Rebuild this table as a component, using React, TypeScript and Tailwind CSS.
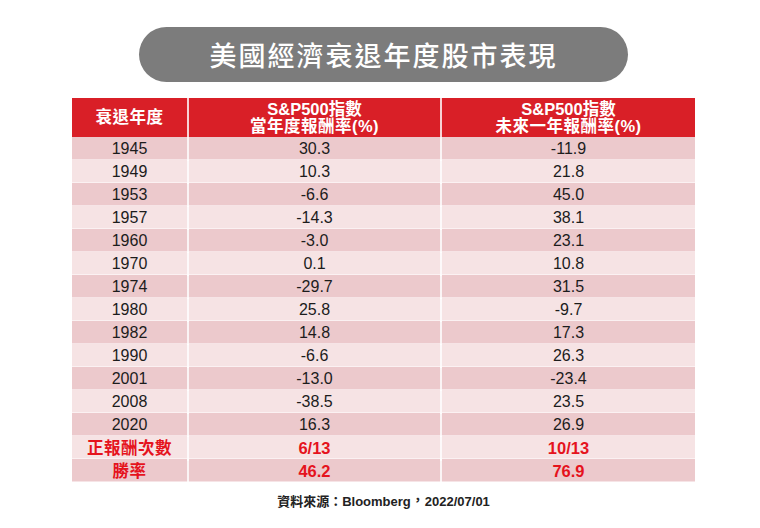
const rows: [string, string, string][] = [
  ["1945", "30.3", "-11.9"],
  ["1949", "10.3", "21.8"],
  ["1953", "-6.6", "45.0"],
  ["1957", "-14.3", "38.1"],
  ["1960", "-3.0", "23.1"],
  ["1970", "0.1", "10.8"],
  ["1974", "-29.7", "31.5"],
  ["1980", "25.8", "-9.7"],
  ["1982", "14.8", "17.3"],
  ["1990", "-6.6", "26.3"],
  ["2001", "-13.0", "-23.4"],
  ["2008", "-38.5", "23.5"],
  ["2020", "16.3", "26.9"],
];

const summary: [string, string, string][] = [
  ["正報酬次數", "6/13", "10/13"],
  ["勝率", "46.2", "76.9"],
];

const font = { fontFamily: '"Liberation Sans", "Noto Sans CJK TC", sans-serif' };
const tc = { fontFamily: '"Noto Sans CJK TC", sans-serif' };

function Cell({ children, last, className }: { children: React.ReactNode; last?: boolean; className?: string }) {
  return (
    <div
      className={`flex items-center justify-center ${last ? "" : "border-r-2 border-white/80"} ${className ?? ""}`}
    >
      {children}
    </div>
  );
}

export default function App() {
  return (
    <div lang="zh-Hant-TW" className="w-[760px] h-[528px] bg-white" style={font}>
      <div className="w-[623px] ml-[72px] pt-[27px] flex flex-col items-center">
        <div className="w-[489px] h-[55px] rounded-full bg-[#7c7c7c] flex items-center justify-center">
          <span className="text-white text-[27px] font-medium tracking-[2px] leading-none" style={tc}>
            美國經濟衰退年度股市表現
          </span>
        </div>

        <div className="w-full mt-[16px]">
          <div className="grid grid-cols-[117px_253px_253px] h-[39px] bg-[#d91f27] text-white font-bold text-[16.5px] leading-[17px]">
            <Cell className="tracking-[0.5px]">衰退年度</Cell>
            <Cell className="flex-col">
              <span>S&amp;P500指數</span>
              <span className="tracking-[0.5px]">當年度報酬率(%)</span>
            </Cell>
            <Cell last className="flex-col">
              <span>S&amp;P500指數</span>
              <span className="tracking-[0.5px]">未來一年報酬率(%)</span>
            </Cell>
          </div>

          {rows.map((r, i) => (
            <div
              key={r[0]}
              className={`grid grid-cols-[117px_253px_253px] h-[23px] border-b border-white/50 text-[16px] text-[#1c1c1c] ${
                i % 2 === 0 ? "bg-[#ecc9cc]" : "bg-[#f6e3e4]"
              }`}
            >
              <Cell>{r[0]}</Cell>
              <Cell>{r[1]}</Cell>
              <Cell last>{r[2]}</Cell>
            </div>
          ))}

          {summary.map((r, i) => (
            <div
              key={r[0]}
              className={`grid grid-cols-[117px_253px_253px] h-[23px] border-b border-white/50 text-[16.5px] font-bold text-[#e5131d] ${
                i % 2 === 0 ? "bg-[#f6e3e4]" : "bg-[#ecc9cc]"
              }`}
            >
              <Cell className="tracking-[0.5px]">{r[0]}</Cell>
              <Cell>{r[1]}</Cell>
              <Cell last>{r[2]}</Cell>
            </div>
          ))}
        </div>

        <p className="mt-[9px] text-[13px] font-bold text-[#222]">
          資料來源<span style={tc}>：</span>Bloomberg
          <span className="inline-block w-[14px] text-center -translate-y-[2px]" style={tc}>
            ，
          </span>
          2022/07/01
        </p>
      </div>
    </div>
  );
}
